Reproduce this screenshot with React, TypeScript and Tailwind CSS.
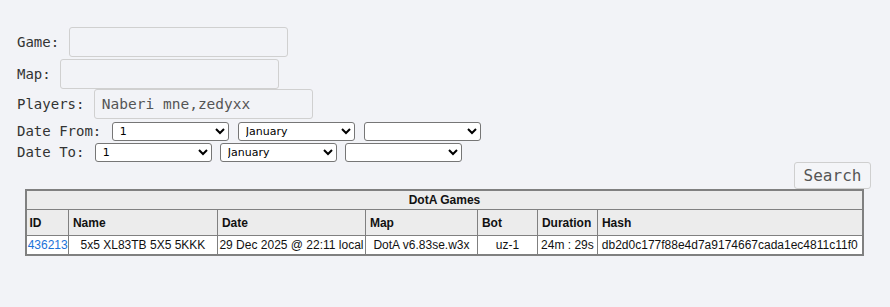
import React from "react";

const mono = { fontFamily: '"DejaVu Sans Mono", monospace' };
const arial = { fontFamily: '"Liberation Sans", Arial, sans-serif' };

function Sel({ value, w }: { value: string; w: string }) {
  return (
    <select
      defaultValue={value}
      className={`${w} h-[19px] border border-[#767676] rounded-[3px] bg-white text-[11px] text-black pl-[3px]`}
      style={{ fontFamily: '"DejaVu Sans", sans-serif' }}
    >
      <option value={value}>{value}</option>
    </select>
  );
}

const inputCls =
  "ml-[1px] w-[219px] h-[30px] border border-[#d0d0d0] rounded-[3px] bg-[#f2f3f7] px-[7px] py-0 text-[14.5px] leading-[24px] text-[#555]";

export default function App() {
  return (
    <div className="min-h-[307px] w-[890px] bg-[#f2f3f7] pl-[17px] pr-[18px] pt-[27px] text-[#333]">
      <div className="flex flex-col text-[14px]" style={mono}>
        <div className="flex items-center h-[30px]">
          <span className="whitespace-pre">Game: </span>
          <input className={inputCls} style={mono} />
        </div>
        <div className="flex items-center h-[30px] mt-[2px]">
          <span className="whitespace-pre">Map: </span>
          <input className={inputCls} style={mono} />
        </div>
        <div className="flex items-center h-[30px]">
          <span className="whitespace-pre">Players: </span>
          <input defaultValue="Naberi_mne,zedyxx" className={inputCls} style={mono} />
        </div>
        <div className="flex items-center h-[19px] mt-[3px]">
          <span className="whitespace-pre">Date From: </span>
          <div className="ml-[2px] flex gap-[9px]">
            <Sel value="1" w="w-[117px]" />
            <Sel value="January" w="w-[117px]" />
            <Sel value="" w="w-[117px]" />
          </div>
        </div>
        <div className="flex items-center h-[19px] mt-[2px]">
          <span className="whitespace-pre">Date To: </span>
          <div className="ml-[2px] flex gap-[8px]">
            <Sel value="1" w="w-[117px]" />
            <Sel value="January" w="w-[117px]" />
            <Sel value="" w="w-[117px]" />
          </div>
        </div>
      </div>
      <div className="flex justify-end pr-[1px]">
        <button
          className="h-[27px] w-[77px] border border-[#cfcfcf] rounded-[3px] bg-[#f4f5f8] text-[16px] text-[#555]"
          style={mono}
        >
          Search
        </button>
      </div>
      <div className="flex justify-center">
        <table
          className="table-fixed border-collapse border-2 border-[#808080] text-[12px] text-[#111] w-[836px]"
          style={arial}
        >
          <colgroup>
            <col className="w-[42px]" />
            <col className="w-[149px]" />
            <col className="w-[148px]" />
            <col className="w-[112px]" />
            <col className="w-[60px]" />
            <col className="w-[60px]" />
            <col className="w-[265px]" />
          </colgroup>
          <thead>
            <tr className="bg-[#ececec] h-[19px]">
              <th colSpan={7} className="border border-[#808080] font-bold text-center">
                DotA Games
              </th>
            </tr>
            <tr className="bg-[#ececec] h-[26px]">
              <th className="border border-[#808080] text-left px-[2px] font-bold">ID</th>
              <th className="border border-[#808080] text-left px-[4px] font-bold">Name</th>
              <th className="border border-[#808080] text-left px-[4px] font-bold">Date</th>
              <th className="border border-[#808080] text-left px-[4px] font-bold">Map</th>
              <th className="border border-[#808080] text-left px-[4px] font-bold">Bot</th>
              <th className="border border-[#808080] text-left px-[4px] font-bold">Duration</th>
              <th className="border border-[#808080] text-left px-[4px] font-bold">Hash</th>
            </tr>
          </thead>
          <tbody>
            <tr className="bg-white h-[19px]">
              <td className="border border-[#808080] text-center whitespace-nowrap overflow-visible">
                <a className="text-[#1a73d9]" href="#">436213</a>
              </td>
              <td className="border border-[#808080] text-center whitespace-nowrap">5x5 XL83TB 5X5 5KKK</td>
              <td className="border border-[#808080] text-center whitespace-nowrap">29 Dec 2025 @ 22:11 local</td>
              <td className="border border-[#808080] text-center whitespace-nowrap">DotA v6.83se.w3x</td>
              <td className="border border-[#808080] text-center whitespace-nowrap">uz-1</td>
              <td className="border border-[#808080] text-center whitespace-nowrap">24m : 29s</td>
              <td className="border border-[#808080] text-center whitespace-nowrap">db2d0c177f88e4d7a9174667cada1ec4811c11f0</td>
            </tr>
          </tbody>
        </table>
      </div>
    </div>
  );
}
